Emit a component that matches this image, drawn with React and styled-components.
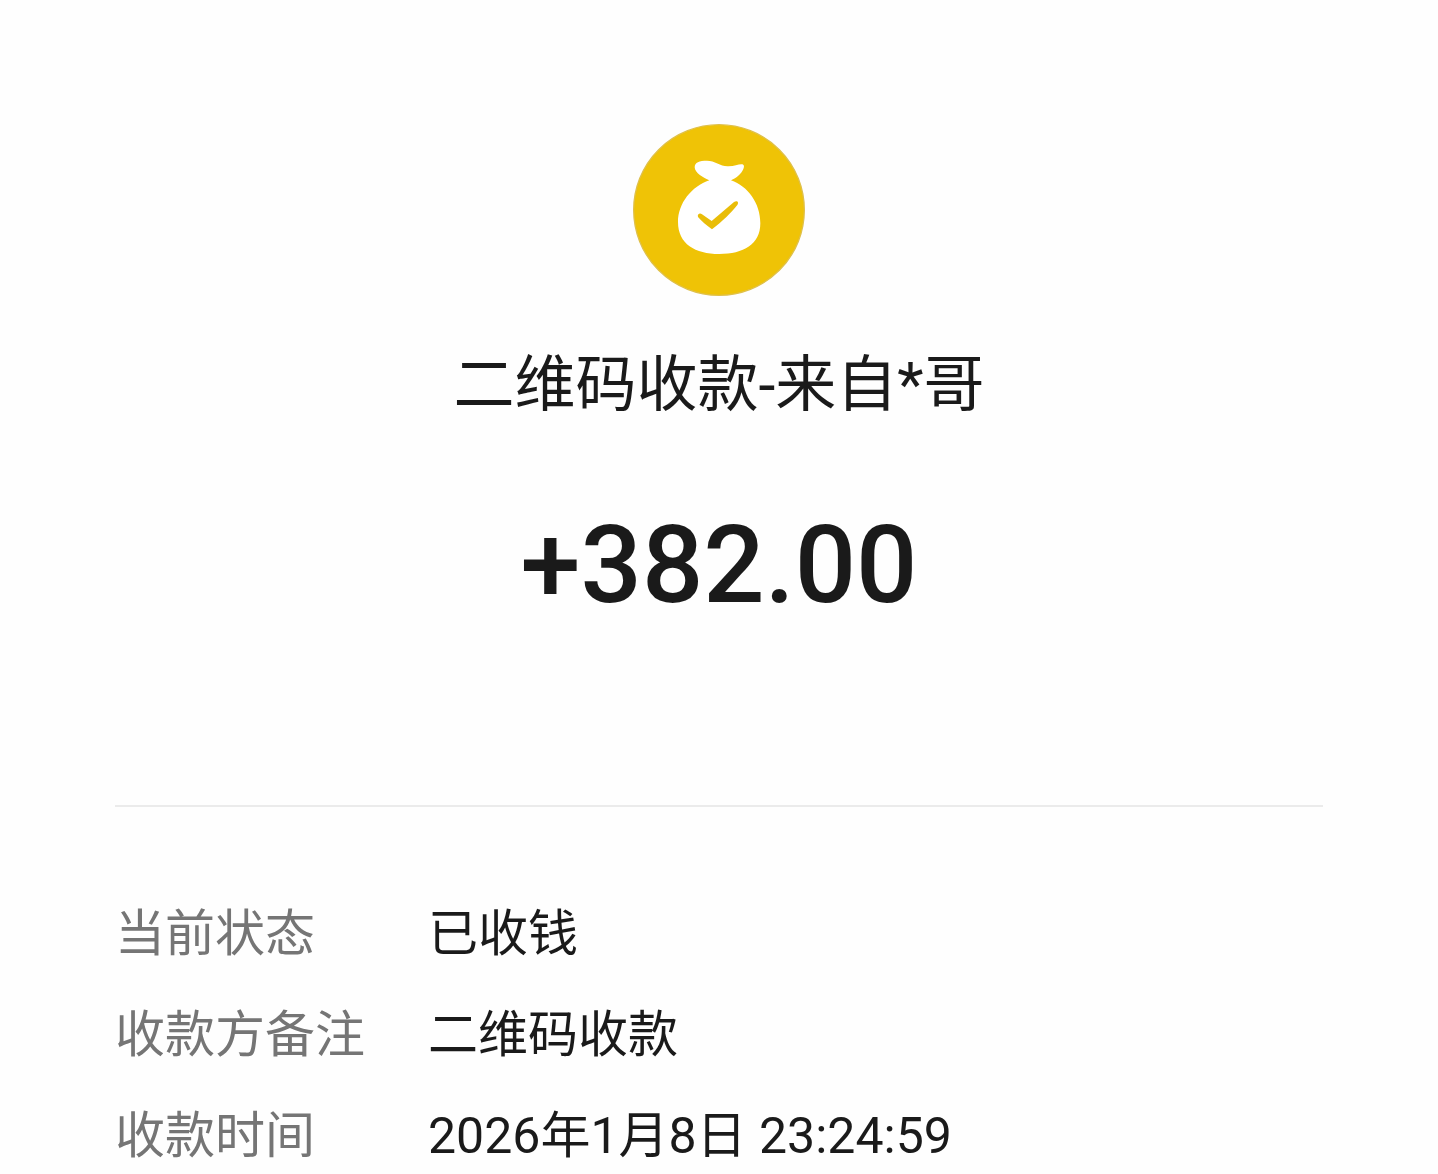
import React from "react";
import styled, { createGlobalStyle } from "styled-components";

const details = [
  { label: "当前状态", value: "已收钱" },
  { label: "收款方备注", value: "二维码收款" },
  { label: "收款时间", value: "2026年1月8日 23:24:59" },
];

const MoneyBag = () => (
  <BagIcon viewBox="0 0 516 516" aria-hidden="true">
    <circle cx="258" cy="258" r="256" fill="#efc306" stroke="#dfc04a" strokeWidth="4" />
    <path
      fill="#fff"
      d="M229 169 C212 162 185 147 185 130 C185 115 199 110 222 110 C245 110 262 126 283 127 C302 128 315 121 325 121 C333 121 335 127 331 135 C325 150 311 161 294 169 C345 187 382 238 382 298 C382 362 331 390 259 390 C187 390 135 360 135 294 C135 238 176 187 229 169 Z"
    />
    <path
      fill="#e9bd08"
      d="M195 279 C192 270 201 266 207 271 L236 291 L303 234 C311 228 319 233 313 243 C296 265 268 292 237 316 C221 304 205 291 195 279 Z"
    />
  </BagIcon>
);

export default function App() {
  return (
    <Page>
      <GlobalStyle />
      <Summary>
        <MoneyBag />
        <Title>二维码收款-来自*哥</Title>
        <Amount>+382.00</Amount>
      </Summary>
      <Details>
        {details.map(({ label, value }) => (
          <Row key={label}>
            <Label>{label}</Label>
            <Value>{value}</Value>
          </Row>
        ))}
      </Details>
    </Page>
  );
}

const GlobalStyle = createGlobalStyle`
  * {
    box-sizing: border-box;
  }
  body {
    margin: 0;
    background-color: #fefefe;
    color: #1a1a1a;
    font-family: Roboto, "Noto Sans CJK SC", sans-serif;
  }
`;
const Page = styled.main`
  padding: 124px 115px 0;
`;
const Summary = styled.header`
  display: flex;
  flex-direction: column;
  align-items: center;
  padding-bottom: 176px;
  border-bottom: 2px solid #ebebeb;
`;
const BagIcon = styled.svg`
  display: block;
  width: 172px;
  height: 172px;
`;
const Title = styled.h1`
  margin: 47px 0 0;
  font-size: 61px;
  line-height: 84px;
  font-weight: 400;
`;
const Amount = styled.p`
  margin: 74px 0 0;
  font-size: 108px;
  line-height: 128px;
  font-weight: 500;
`;
const Details = styled.dl`
  display: grid;
  gap: 37px;
  margin: 0;
  padding: 95px 0 0;
`;
const Row = styled.div`
  display: grid;
  grid-template-columns: 313px 1fr;
  font-size: 50px;
  line-height: 64px;
`;
const Label = styled.dt`
  color: #757575;
`;
const Value = styled.dd`
  margin: 0;
`;
